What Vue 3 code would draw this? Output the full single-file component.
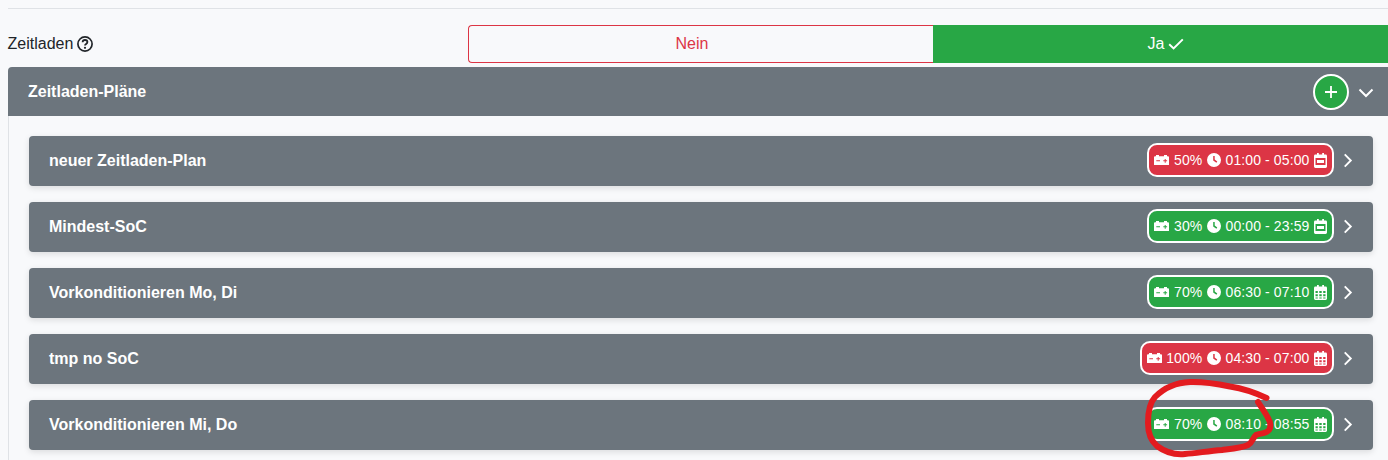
<script setup>
const plans = [
  { name: 'neuer Zeitladen-Plan', soc: '50%', time: '01:00 - 05:00', ok: false, once: true },
  { name: 'Mindest-SoC', soc: '30%', time: '00:00 - 23:59', ok: true, once: true },
  { name: 'Vorkonditionieren Mo, Di', soc: '70%', time: '06:30 - 07:10', ok: true, once: false },
  { name: 'tmp no SoC', soc: '100%', time: '04:30 - 07:00', ok: false, once: false },
  { name: 'Vorkonditionieren Mi, Do', soc: '70%', time: '08:10 - 08:55', ok: true, once: false },
]
</script>

<template>
  <div class="page">
    <hr class="rule" />
    <div class="setting">
      <div class="label">
        <span>Zeitladen</span>
        <svg class="help" viewBox="0 0 16 16" aria-hidden="true">
          <circle cx="8" cy="8" r="7.100" fill="none" stroke="currentColor" stroke-width="1.700" />
          <path d="M5.600 6.200C5.700 4.800 6.700 4 8 4c1.400 0 2.400.8 2.400 2 0 2-2.400 1.800-2.400 3.500" fill="none" stroke="currentColor" stroke-width="1.800" />
          <circle cx="8" cy="11.800" r="1.100" fill="currentColor" />
        </svg>
      </div>
      <div class="toggle">
        <button class="opt no">Nein</button>
        <button class="opt yes">
          <span>Ja</span>
          <svg class="check" viewBox="0 0 16 12" aria-hidden="true">
            <path d="M1.200 6.200 5.600 10.400 14.800 1.400" fill="none" stroke="currentColor" stroke-width="2" />
          </svg>
        </button>
      </div>
    </div>

    <section class="card">
      <header class="card-head">
        <span class="title">Zeitladen-Pläne</span>
        <div class="head-actions">
          <span class="add">
            <svg viewBox="0 0 14 14" aria-hidden="true">
              <path d="M7 1v12M1 7h12" fill="none" stroke="currentColor" stroke-width="1.800" />
            </svg>
          </span>
          <svg class="chev-down" viewBox="0 0 16 10" aria-hidden="true">
            <path d="M1.500 1.500 8 8l6.500-6.500" fill="none" stroke="currentColor" stroke-width="2" />
          </svg>
        </div>
      </header>
      <div class="card-body">
        <article v-for="p in plans" :key="p.name" class="plan">
          <span class="title">{{ p.name }}</span>
          <div class="plan-right">
            <span class="badge" :class="p.ok ? 'green' : 'red'">
              <svg class="ico bat" viewBox="0 0 15 10.500" aria-hidden="true">
                <path fill-rule="evenodd" d="M2 0h3v1.200h5V0h3v1.200h1A1 1 0 0 1 15 2.200v7.300a1 1 0 0 1-1 1H1a1 1 0 0 1-1-1V2.200a1 1 0 0 1 1-1h1zM2.300 5.300v1h3.700v-1zM9.300 5.300v1h1.400v1.400h1v-1.400h1.400v-1h-1.400V3.900h-1v1.400z" fill="currentColor" />
              </svg>
              <span>{{ p.soc }}</span>
              <svg class="ico" viewBox="0 0 14 14" aria-hidden="true">
                <path fill-rule="evenodd" d="M7 0a7 7 0 1 1 0 14A7 7 0 0 1 7 0zM6.200 3v4.400l3.200 2.300.9-1.200-2.600-1.900V3z" fill="currentColor" />
              </svg>
              <span>{{ p.time }}</span>
              <svg v-if="p.once" class="ico cal" viewBox="0 0 13 15" aria-hidden="true">
                <path fill-rule="evenodd" d="M3 0h1.800v1.600h3.400V0H10v1.600h1.600A1.400 1.400 0 0 1 13 3v10.600a1.400 1.400 0 0 1-1.400 1.400H1.400A1.400 1.400 0 0 1 0 13.600V3a1.400 1.400 0 0 1 1.400-1.400H3zM1.500 5v7h10V5zM3 7h7v3H3z" fill="currentColor" />
              </svg>
              <svg v-else class="ico cal" viewBox="0 0 13 15" aria-hidden="true">
                <path fill-rule="evenodd" d="M3 0h1.800v1.600h3.400V0H10v1.600h1.600A1.400 1.400 0 0 1 13 3v10.600a1.400 1.400 0 0 1-1.400 1.400H1.400A1.400 1.400 0 0 1 0 13.600V3a1.400 1.400 0 0 1 1.400-1.400H3zM1.500 6v2h2.300V6zM5.300 6v2h2.400V6zM9.200 6v2h2.300V6zM1.500 9.300v2h2.300v-2zM5.300 9.300v2h2.400v-2zM9.200 9.300v2h2.300v-2zM1.500 12.500v1h2.300v-1zM5.300 12.500v1h2.400v-1zM9.200 12.500v1h2.300v-1z" fill="currentColor" />
              </svg>
            </span>
            <svg class="chev-right" viewBox="0 0 10 16" aria-hidden="true">
              <path d="M1.500 1.500 8 8l-6.500 6.500" fill="none" stroke="currentColor" stroke-width="2" />
            </svg>
          </div>
        </article>
      </div>
    </section>

    <svg class="scribble" viewBox="0 0 140 84" aria-hidden="true">
      <path d="M126.500 22C116 17 103 12.500 90 10.500 78 8 64 5.500 50 6 37 6.500 25 11 15 21 9.500 27 8 38 8 47c0 9 2 17 9 23 8 6 18 9 28 8 12-1 24-3 37-4 8-1 20-2 26-5 5-3 5-8 8-10 4-2 10-1 13-5 2-3 2-7-1-12-3-6-7-11-10-16" fill="none" stroke="#e31b1f" stroke-width="6" stroke-linecap="round" stroke-linejoin="round" />
    </svg>
  </div>
</template>

<style>
html, body {
  margin: 0;
  background: #f8f9fb;
  overflow: hidden;
}
</style>

<style scoped>
.page {
  position: relative;
  box-sizing: border-box;
  width: 1402px;
  height: 460px;
  padding: 8px 8px 0;
  font-family: "Liberation Sans", Arial, sans-serif;
  font-size: 16px;
  line-height: 24px;
  color: #212529;
  overflow: hidden;
}
.rule {
  margin: 0;
  border: 0;
  border-top: 1px solid #dfe2e6;
}
.setting {
  display: grid;
  grid-template-columns: 460px 1fr;
  margin: 16px 0 4px;
}
.label {
  display: flex;
  align-items: center;
  gap: 4px;
  margin-left: -0.5px;
}
.help {
  width: 16px;
  height: 16px;
}
.toggle {
  display: grid;
  grid-template-columns: 465px 1fr;
  height: 38px;
}
.opt {
  font: inherit;
  margin: 0;
  padding: 0;
  cursor: pointer;
}
.no {
  background: transparent;
  border: 1px solid #dc3545;
  border-right: 0;
  border-radius: 4px 0 0 4px;
  color: #dc3545;
  padding-right: 18px;
}
.yes {
  display: flex;
  align-items: center;
  justify-content: center;
  gap: 4px;
  background: #28a745;
  border: 1px solid #28a745;
  color: #fff;
  padding-left: 5px;
}
.check {
  width: 16px;
  height: 12px;
}
.card-head {
  display: flex;
  align-items: center;
  justify-content: space-between;
  box-sizing: border-box;
  height: 49px;
  padding: 0 20px;
  background: #6c757d;
  border-radius: 4px 4px 0 0;
  color: #fff;
}
.title {
  font-weight: 700;
  color: #fff;
}
.head-actions {
  display: flex;
  align-items: center;
  gap: 9px;
}
.add {
  box-sizing: border-box;
  display: flex;
  align-items: center;
  justify-content: center;
  width: 36px;
  height: 36px;
  border: 2px solid #fff;
  border-radius: 50%;
  background: #28a745;
  color: #fff;
}
.add svg {
  width: 14px;
  height: 14px;
}
.chev-down {
  width: 16px;
  height: 10px;
  color: #fff;
  margin-top: 2px;
}
.card-body {
  display: flex;
  flex-direction: column;
  gap: 16px;
  padding: 20px;
  border: 1px solid #dfe2e6;
  border-top: 0;
}
.plan {
  display: flex;
  align-items: center;
  justify-content: space-between;
  box-sizing: border-box;
  height: 50px;
  padding: 0 20px;
  background: #6c757d;
  border-radius: 4px;
  box-shadow: 0 2px 6px rgba(0, 0, 0, 0.12);
}
.plan-right {
  display: flex;
  align-items: center;
  gap: 9px;
}
.badge {
  display: flex;
  align-items: center;
  box-sizing: border-box;
  height: 34px;
  margin-bottom: 2px;
  padding: 0 5px;
  gap: 4.600px;
  border: 2px solid #fff;
  border-radius: 10px;
  color: #fff;
  font-size: 14px;
  line-height: 20px;
  letter-spacing: 0.100px;
}
.green {
  background: #28a745;
}
.red {
  background: #dc3545;
}
.ico {
  width: 14px;
  height: 14px;
  flex: none;
}
.bat {
  width: 15px;
  height: 10.500px;
}
.cal {
  width: 13px;
  height: 15px;
}
.chev-right {
  width: 10px;
  height: 15px;
  color: #fff;
  margin-bottom: 2px;
}
.scribble {
  position: absolute;
  left: 1140px;
  top: 376px;
  width: 140px;
  height: 84px;
}
</style>
